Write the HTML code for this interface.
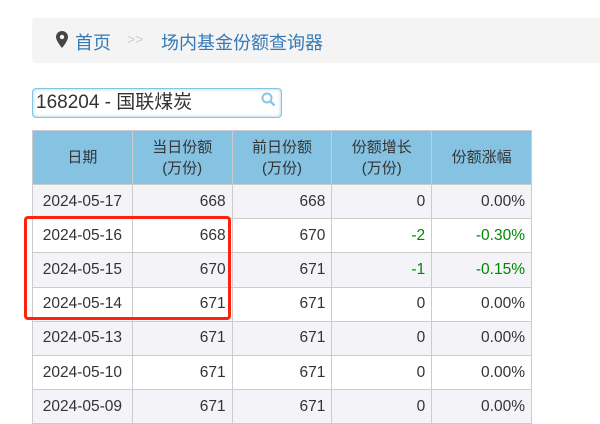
<!DOCTYPE html>
<html><head><meta charset="utf-8"><style>
body{margin:0;background:#fff;font-family:"Liberation Sans","Noto Sans CJK SC",sans-serif;width:600px;height:421px;overflow:hidden;position:relative}
.bc{position:absolute;left:32px;top:18px;width:600px;height:45px;background:#f4f4f4;border-radius:4px;font-size:18px;color:#337ab7}
.bc span{position:absolute;top:11px}
.sr{position:absolute;left:32px;top:88px;border:1px solid #86c3e2;border-radius:4px;box-shadow:inset 0 0 3px #9cd;font-size:19px;color:#333;line-height:28px;padding-left:3px;box-sizing:border-box;width:250px;height:30px}
table{position:absolute;left:32px;top:130px;border-collapse:collapse;font-size:15.5px;color:#333;table-layout:fixed;width:500px}
td,th{border:1px solid #ccc;height:34.2px;padding:0 6px 0 0;text-align:right;box-sizing:border-box}
th{background:#86c3e2;font-weight:normal;text-align:center;height:54px;padding:0;line-height:21px;font-size:15px}
td:first-child{text-align:center;padding:0}
tr:nth-child(even) td{background:#f4f4f8}
.g{color:#080}
.box{position:absolute;left:24px;top:216px;width:207px;height:104px;border:3px solid #f21;border-radius:4px;box-sizing:border-box}
</style></head><body>
<div class="bc">
<svg style="position:absolute;left:24px;top:13px" width="12" height="17" viewBox="0 0 12 17"><path d="M6 0C2.7 0 0 2.6 0 5.9 0 10 6 17 6 17s6-7 6-11.1C12 2.6 9.3 0 6 0z" fill="#444"/><circle cx="6" cy="6" r="2.2" fill="#f4f4f4"/></svg>
<span style="left:43px">首页</span><span style="left:95px;color:#ccc;font-size:14px;top:13px">&gt;&gt;</span><span style="left:129px">场内基金份额查询器</span></div>
<div class="sr">168204 - 国联煤炭
<svg style="position:absolute;right:5px;top:3px" width="15" height="15" viewBox="0 0 15 15"><circle cx="6" cy="6" r="4.5" fill="none" stroke="#8cc4e6" stroke-width="2"/><path d="M9.5 9.5L13.5 13.5" stroke="#8cc4e6" stroke-width="2.5"/></svg></div>
<table>
<tr><th>日期</th><th>当日份额<br>(万份)</th><th>前日份额<br>(万份)</th><th>份额增长<br>(万份)</th><th>份额涨幅</th></tr>
<tr><td>2024-05-17</td><td>668</td><td>668</td><td>0</td><td>0.00%</td></tr>
<tr><td>2024-05-16</td><td>668</td><td>670</td><td class="g">-2</td><td class="g">-0.30%</td></tr>
<tr><td>2024-05-15</td><td>670</td><td>671</td><td class="g">-1</td><td class="g">-0.15%</td></tr>
<tr><td>2024-05-14</td><td>671</td><td>671</td><td>0</td><td>0.00%</td></tr>
<tr><td>2024-05-13</td><td>671</td><td>671</td><td>0</td><td>0.00%</td></tr>
<tr><td>2024-05-10</td><td>671</td><td>671</td><td>0</td><td>0.00%</td></tr>
<tr><td>2024-05-09</td><td>671</td><td>671</td><td>0</td><td>0.00%</td></tr>
</table>
<div class="box"></div>
</body></html>
